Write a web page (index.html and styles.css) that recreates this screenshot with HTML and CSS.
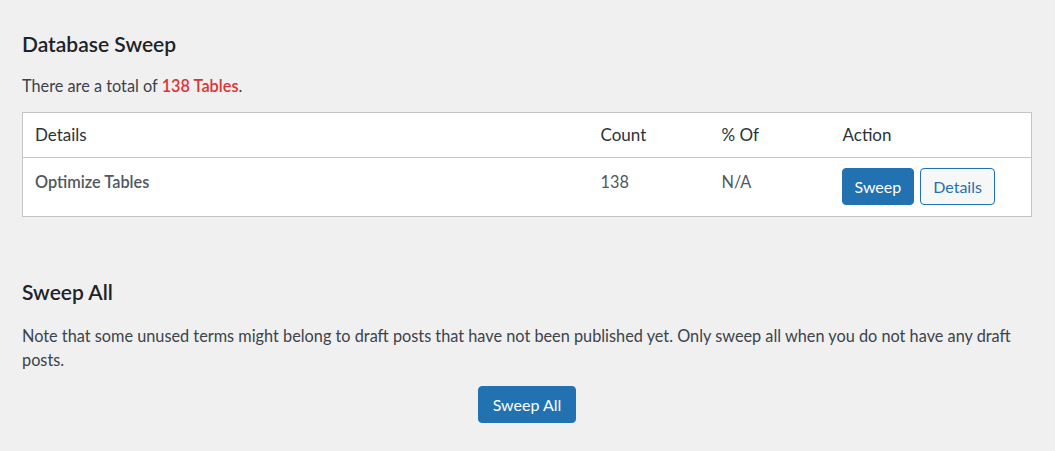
FILE: index.html
```html
<!DOCTYPE html>
<html lang="en">
<head>
    <meta charset="UTF-8">
    <meta name="viewport" content="width=device-width, initial-scale=1.0">
    <title>Database Sweep</title>
    <link rel="stylesheet" href="styles.css">
</head>
<body>
    <div class="wrap">
        <h2>Database Sweep</h2>
        <p class="summary">There are a total of <strong>138 Tables</strong>.</p>

        <table class="sweep-table">
            <colgroup>
                <col class="col-details">
                <col class="col-count">
                <col class="col-percent">
                <col class="col-action">
            </colgroup>
            <thead>
                <tr>
                    <th>Details</th>
                    <th>Count</th>
                    <th>% Of</th>
                    <th>Action</th>
                </tr>
            </thead>
            <tbody>
                <tr>
                    <td class="name">Optimize Tables</td>
                    <td>138</td>
                    <td>N/A</td>
                    <td class="actions">
                        <button class="btn btn-primary">Sweep</button>
                        <button class="btn btn-secondary">Details</button>
                    </td>
                </tr>
            </tbody>
        </table>

        <h2 class="sweep-all-title">Sweep All</h2>
        <p class="note">Note that some unused terms might belong to draft posts that have not been published yet. Only sweep all when you do not have any draft posts.</p>
        <div class="sweep-all">
            <button class="btn btn-primary">Sweep All</button>
        </div>
    </div>
</body>
</html>
```

FILE: styles.css
```css
body {
    margin: 0;
    background-color: #f0f0f1;
    font-family: Lato, "Liberation Sans", sans-serif;
    font-size: 16.3px;
    color: #3c434a;
}
.wrap {
    padding: 30px 24px 0 22px;
}
h2 {
    margin: 0;
    font-size: 21px;
    line-height: 27px;
    font-weight: 600;
    color: #1d2327;
}
p {
    margin: 0;
    line-height: 24px;
}
.summary {
    margin-top: 17px;
}
.summary strong {
    color: #d63638;
    font-weight: 600;
}
.sweep-table {
    margin-top: 14px;
    width: 1010px;
    border-collapse: collapse;
    table-layout: fixed;
    background-color: #fff;
    border: 1px solid #c3c4c7;
}
.col-details { width: 566px; }
.col-count { width: 121px; }
.col-percent { width: 121px; }
.sweep-table th {
    text-align: left;
    font-weight: normal;
    font-size: 17px;
    line-height: 28px;
    padding: 8px 12px;
    color: #2c3338;
    border-bottom: 1px solid #c3c4c7;
}
.sweep-table td {
    vertical-align: top;
    padding: 12px 12px 11px;
    line-height: 24px;
    color: #50575e;
}
.sweep-table td.name {
    font-weight: 600;
}
.sweep-table td.actions {
    padding: 10px 12px 11px 11px;
    display: flex;
    gap: 6px;
}
.btn {
    font-family: inherit;
    font-size: 16px;
    height: 37px;
    padding: 0 12px;
    border-radius: 4px;
    cursor: pointer;
}
.btn-primary {
    background-color: #2271b1;
    border: 1px solid #2271b1;
    color: #fff;
}
.btn-secondary {
    background-color: #f6f7f7;
    border: 1px solid #2271b1;
    color: #2271b1;
}
.sweep-all-title {
    margin-top: 61px;
}
.note {
    margin-top: 19px;
}
.sweep-all {
    display: flex;
    justify-content: center;
    margin-top: 14px;
    width: 1010px;
}
.sweep-all .btn {
    padding: 0 14px;
}
```
